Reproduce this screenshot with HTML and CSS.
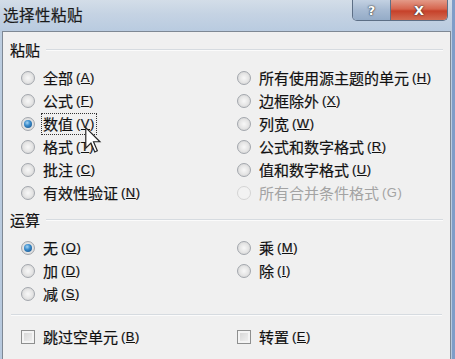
FILE: index.html
```html
<!DOCTYPE html>
<html lang="zh-CN">
<head>
<meta charset="utf-8">
<title>选择性粘贴</title>
<link rel="stylesheet" href="styles.css">
</head>
<body>
<div class="window">
  <div class="titlebar">
    <span class="title">选择性粘贴</span>
    <div class="caption-btns">
      <span class="cbtn help">?</span>
      <span class="cbtn close">X</span>
    </div>
  </div>
  <div class="panel">
    <div class="group-label"><span>粘贴</span></div>
    <div class="options">
      <div class="opt"><span class="radio"></span><span class="txt">全部<span class="acc">(<u>A</u>)</span></span></div>
      <div class="opt"><span class="radio"></span><span class="txt">所有使用源主题的单元<span class="acc">(<u>H</u>)</span></span></div>
      <div class="opt"><span class="radio"></span><span class="txt">公式<span class="acc">(<u>F</u>)</span></span></div>
      <div class="opt"><span class="radio"></span><span class="txt">边框除外<span class="acc">(<u>X</u>)</span></span></div>
      <div class="opt"><span class="radio checked"></span><span class="txt focus">数值<span class="acc">(<u>V</u>)</span></span></div>
      <div class="opt"><span class="radio"></span><span class="txt">列宽<span class="acc">(<u>W</u>)</span></span></div>
      <div class="opt"><span class="radio"></span><span class="txt">格式<span class="acc">(<u>T</u>)</span></span></div>
      <div class="opt"><span class="radio"></span><span class="txt">公式和数字格式<span class="acc">(<u>R</u>)</span></span></div>
      <div class="opt"><span class="radio"></span><span class="txt">批注<span class="acc">(<u>C</u>)</span></span></div>
      <div class="opt"><span class="radio"></span><span class="txt">值和数字格式<span class="acc">(<u>U</u>)</span></span></div>
      <div class="opt"><span class="radio"></span><span class="txt">有效性验证<span class="acc">(<u>N</u>)</span></span></div>
      <div class="opt disabled"><span class="radio"></span><span class="txt">所有合并条件格式<span class="acc">(G)</span></span></div>
    </div>
    <div class="group-label second"><span>运算</span></div>
    <div class="options">
      <div class="opt"><span class="radio checked"></span><span class="txt">无<span class="acc">(<u>O</u>)</span></span></div>
      <div class="opt"><span class="radio"></span><span class="txt">乘<span class="acc">(<u>M</u>)</span></span></div>
      <div class="opt"><span class="radio"></span><span class="txt">加<span class="acc">(<u>D</u>)</span></span></div>
      <div class="opt"><span class="radio"></span><span class="txt">除<span class="acc">(<u>I</u>)</span></span></div>
      <div class="opt"><span class="radio"></span><span class="txt">减<span class="acc">(<u>S</u>)</span></span></div>
      <div class="opt"></div>
    </div>
    <div class="separator"></div>
    <div class="options checks">
      <div class="opt"><span class="checkbox"></span><span class="txt">跳过空单元<span class="acc">(<u>B</u>)</span></span></div>
      <div class="opt"><span class="checkbox"></span><span class="txt">转置<span class="acc">(<u>E</u>)</span></span></div>
    </div>
    <svg class="cursor" width="17" height="27" viewBox="0 0 13 21">
      <path d="M0.5,0.5 L0.5,16.5 L4.5,12.5 L7.5,19.5 L9.5,18.5 L6.5,11.5 L11.5,11.5 Z" fill="#fff" stroke="#222" stroke-width="0.9" stroke-linejoin="miter"/>
    </svg>
  </div>
</div>
</body>
</html>
```
FILE: styles.css
```css
html, body {
  margin: 0;
  padding: 0;
}
body {
  width: 455px;
  height: 359px;
  overflow: hidden;
  font-family: "Noto Sans CJK SC", "Noto Sans", sans-serif;
  color: #111;
}
.window {
  width: 452px;
  height: 359px;
  display: flex;
  flex-direction: column;
  background: linear-gradient(180deg, #cdd9e6 0px, #bccde0 30px, #b7c9de 100%);
  border-right: 3px solid #7f9dc8;
}
.titlebar {
  height: 31px;
  display: flex;
  align-items: flex-start;
  padding-left: 3px;
  padding-right: 4px;
  background: linear-gradient(180deg, #d3dde8 0%, #c5d3e3 45%, #b9cbe0 100%);
}
.title {
  font-size: 15.5px;
  line-height: 28px;
  color: #1a1a1a;
  letter-spacing: 0.5px;
  -webkit-text-stroke: 0.2px #1a1a1a;
}
.caption-btns {
  margin-left: auto;
  display: flex;
  height: 20px;
  border: 1px solid #5d6f86;
  border-top: none;
  border-radius: 0 0 5px 5px;
  overflow: hidden;
}
.cbtn {
  display: flex;
  align-items: center;
  justify-content: center;
  height: 20px;
  color: #fff;
  font-family: "DejaVu Sans", sans-serif;
  font-weight: bold;
  text-shadow: 0 0 2px #333, 0 0 1px #222;
}
.help {
  width: 37px;
  font-size: 13px;
  background: linear-gradient(180deg, #c3d1e2 0%, #a7bad2 50%, #94abc7 100%);
  border-right: 1px solid #5d6f86;
}
.close {
  width: 56px;
  font-size: 13px;
  background: linear-gradient(180deg, #e39a88 0%, #d6654e 45%, #c6412a 55%, #d26c52 100%);
}
.panel {
  position: relative;
  flex: 1;
  margin-left: 2px;
  margin-right: 1px;
  border: 1px solid #7e8894;
  border-bottom: none;
  background: #f0f0f0;
  padding-top: 9px;
}
.group-label {
  display: flex;
  align-items: center;
  height: 18px;
  padding-left: 7px;
  padding-right: 7px;
  font-size: 15px;
  line-height: 18px;
  -webkit-text-stroke: 0.2px #111;
}
.group-label::after {
  content: "";
  flex: 1;
  margin-left: 6px;
  border-top: 1px solid #d6dbe0;
  border-bottom: 1px solid #fbfbfb;
}
.group-label.second {
  margin-top: 7px;
}
.options {
  display: grid;
  grid-template-columns: 216px 1fr;
  grid-auto-rows: 23px;
  padding-left: 18px;
  margin-top: 7px;
}
.options.checks {
  margin-top: 9px;
}
.opt {
  display: flex;
  align-items: center;
  gap: 8px;
  font-size: 15px;
  white-space: nowrap;
  -webkit-text-stroke: 0.2px #111;
}
.txt {
  line-height: 18px;
  display: inline-flex;
  align-items: center;
}
.acc {
  font-family: "Liberation Sans", "DejaVu Sans", sans-serif;
  font-size: 13px;
  margin-left: 3px;
  letter-spacing: 0.5px;
}
.focus {
  outline: 1px dotted #333;
  outline-offset: 1px;
}
.disabled {
  color: #a3a3a3;
  -webkit-text-stroke: 0;
}
.radio {
  flex: none;
  width: 14px;
  height: 14px;
  box-sizing: border-box;
  border-radius: 50%;
  border: 1px solid #a3a7ad;
  background: radial-gradient(circle at 50% 50%, #f8f8f8 0%, #e6e6e6 50%, #cdcdcd 100%);
  display: flex;
  align-items: center;
  justify-content: center;
}
.disabled .radio {
  border-color: #d4d4d4;
  background: #f2f2f2;
}
.radio.checked::after {
  content: "";
  width: 8px;
  height: 8px;
  border-radius: 50%;
  background: radial-gradient(circle at 40% 35%, #a6d4f2 0%, #3a8ccc 40%, #14497e 100%);
}
.checkbox {
  flex: none;
  width: 14px;
  height: 14px;
  box-sizing: border-box;
  border: 1px solid #8e8f8f;
  background: linear-gradient(135deg, #d2d2d2 0%, #f4f4f4 100%);
  box-shadow: inset 0 0 0 2px #f4f4f4;
}
.separator {
  margin: 9px 8px 0 8px;
  border-top: 1px solid #d6dbe0;
  border-bottom: 1px solid #fbfbfb;
}
.cursor {
  position: absolute;
  left: 82px;
  top: 95px;
}
```
